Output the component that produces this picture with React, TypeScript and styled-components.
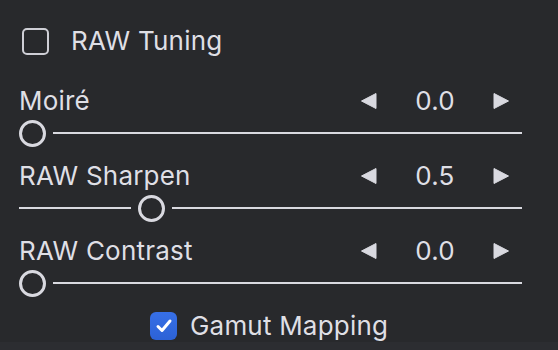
import React from "react";
import styled, { createGlobalStyle } from "styled-components";

const Global = createGlobalStyle`
  html, body { margin: 0; padding: 0; background: #28292c; }
  body { font-family: Inter, "Noto Sans", "Liberation Sans", sans-serif; }
`;

const TEXT = "#dfdfe5";
const LINE = "#d9d9e0";

const Panel = styled.div`
  width: 558px;
  height: 350px;
  box-sizing: border-box;
  background: #28292c;
  display: flex;
  flex-direction: column;
  padding: 14px 36px 0 19px;
  color: ${TEXT};
  font-size: 26px;
  letter-spacing: 0.2px;
`;

const HeaderRow = styled.label`
  display: flex;
  align-items: center;
  gap: 22px;
  height: 54px;
  margin-bottom: 15px;
  padding-left: 3px;
`;

const EmptyBox = styled.span`
  width: 27px;
  height: 27px;
  box-sizing: border-box;
  border: 2px solid #cfcfd6;
  border-radius: 5px;
  flex: none;
`;

const Label = styled.span`
  line-height: 1;
  white-space: nowrap;
`;

const Blocks = styled.div`
  display: flex;
  flex-direction: column;
  gap: 11px;
`;

const Block = styled.div`
  display: flex;
  flex-direction: column;
`;

const LabelRow = styled.div`
  display: flex;
  align-items: center;
  justify-content: space-between;
  height: 36px;
  padding-right: 12px;
`;

const Stepper = styled.div`
  display: flex;
  align-items: center;
`;

const Value = styled.span`
  width: 116px;
  text-align: center;
  line-height: 1;
`;

const Track = styled.div`
  display: flex;
  align-items: center;
  height: 28px;
  width: 503px;
`;

const Line = styled.span<{ $grow?: boolean }>`
  height: 2px;
  background: ${LINE};
  flex: ${(p) => (p.$grow ? "1" : "none")};
`;

const Thumb = styled.span<{ $first: boolean }>`
  width: 27px;
  height: 27px;
  box-sizing: border-box;
  border: 3px solid ${LINE};
  border-radius: 50%;
  flex: none;
  margin: 0 7px 0 ${(p) => (p.$first ? "0" : "7px")};
`;

const Footer = styled.label`
  display: flex;
  align-items: center;
  gap: 13px;
  height: 32px;
  margin-top: 13px;
  padding-left: 131px;
`;

const BlueBox = styled.span`
  width: 27px;
  height: 28px;
  border-radius: 6px;
  background: linear-gradient(#376fe6, #2c62d6);
  display: flex;
  align-items: center;
  justify-content: center;
  flex: none;
`;

const BottomStrip = styled.div`
  flex: 1;
  margin: 0 -36px 0 -19px;
  background: #2c2d31;
`;

const Arrow = ({ dir }: { dir: "left" | "right" }) => (
  <svg width="17" height="18" viewBox="0 0 17 18">
    {dir === "left" ? (
      <path d="M16 1.5 L1.5 9 L16 16.5 Z" fill={LINE} stroke={LINE} strokeWidth="1" strokeLinejoin="round" />
    ) : (
      <path d="M1 1.5 L15.5 9 L1 16.5 Z" fill={LINE} stroke={LINE} strokeWidth="1" strokeLinejoin="round" />
    )}
  </svg>
);

const TRACK_W = 503;
const THUMB = 27;

const Slider = ({ label, value, max }: { label: string; value: number; max: number }) => {
  const frac = value / max;
  const offset = frac * (TRACK_W - THUMB);
  const first = offset < 8;
  return (
    <Block>
      <LabelRow>
        <Label>{label}</Label>
        <Stepper>
          <Arrow dir="left" />
          <Value>{value.toFixed(1)}</Value>
          <Arrow dir="right" />
        </Stepper>
      </LabelRow>
      <Track>
        {!first && <Line style={{ width: `${offset - 7}px` }} />}
        <Thumb $first={first} />
        <Line $grow />
      </Track>
    </Block>
  );
};

export default function App() {
  return (
    <>
      <Global />
      <Panel>
        <HeaderRow>
          <EmptyBox />
          <Label>RAW Tuning</Label>
        </HeaderRow>
        <Blocks>
          <Slider label="Moiré" value={0} max={2} />
          <Slider label="RAW Sharpen" value={0.5} max={2} />
          <Slider label="RAW Contrast" value={0} max={2} />
        </Blocks>
        <Footer>
          <BlueBox>
            <svg width="18" height="16" viewBox="0 0 18 16">
              <path d="M3 8.5 L7 12.5 L15 3" fill="none" stroke="#fff" strokeWidth="3" strokeLinecap="round" strokeLinejoin="round" />
            </svg>
          </BlueBox>
          <Label>Gamut Mapping</Label>
        </Footer>
        <BottomStrip />
      </Panel>
    </>
  );
}
